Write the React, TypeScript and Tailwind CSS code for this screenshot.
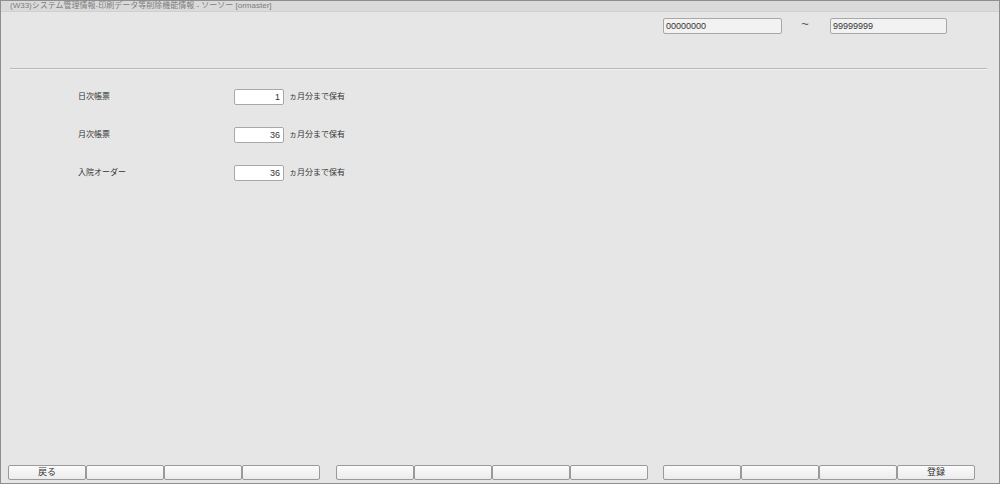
import React from "react";

const font = { fontFamily: '"Liberation Sans", "Noto Sans CJK JP", sans-serif' };

const rows = [
  { label: "日次帳票", value: "1" },
  { label: "月次帳票", value: "36" },
  { label: "入院オーダー", value: "36" },
];

const groups = [
  ["戻る", "", "", ""],
  ["", "", "", ""],
  ["", "", "", "登録"],
];

function FnButton({ text }: { text: string }) {
  return (
    <button className="h-[15px] w-[78px] rounded-[2px] border border-[#9a9a9a] bg-gradient-to-b from-[#fbfbfb] to-[#ececec] text-[9px] leading-none text-[#333]">
      {text}
    </button>
  );
}

export default function App() {
  return (
    <div
      className="flex h-[484px] w-[1000px] flex-col border border-[#8e8e8e] bg-[#e6e6e6] text-[#333]"
      style={font}
    >
      <div className="flex h-[11px] items-center border-b border-[#cfcfcf] bg-[#dadada] pl-[9px] text-[8px] leading-none text-[#7c7c7c]">
        (W33)システム管理情報-印刷データ等削除機能情報 - ソーソー [ormaster]
      </div>

      <div className="mt-[6px] flex h-[16px] items-start justify-end pr-[52px]">
        <div className="h-[16px] w-[119px] rounded-[2px] border border-[#a8a8a8] bg-[#f2f2f2] px-[2px] text-[9px] leading-[14px]">
          00000000
        </div>
        <div className="h-[16px] w-[48px] pr-[2px] text-center text-[13px] leading-[11px] text-[#555]">~</div>
        <div className="h-[16px] w-[117px] rounded-[2px] border border-[#a8a8a8] bg-[#f2f2f2] px-[2px] text-[9px] leading-[14px]">
          99999999
        </div>
      </div>

      <div className="mx-[9px] mr-[12px] mt-[34px] h-[2px] border-t border-[#b8b8b8] bg-[#f2f2f2]" />

      <div className="mt-[19px] flex flex-col gap-[22px]">
        {rows.map((r) => (
          <div key={r.label} className="flex items-center">
            <div className="w-[233px] pl-[77px] text-[8px] leading-none">{r.label}</div>
            <div className="h-[16px] w-[50px] rounded-[2px] border border-[#a8a8a8] bg-white px-[3px] text-right text-[9px] leading-[14px]">
              {r.value}
            </div>
            <div className="pl-[5px] text-[8px] leading-none">ヵ月分まで保有</div>
          </div>
        ))}
      </div>

      <div className="mb-[3px] mt-auto flex pl-[7px]">
        {groups.map((g, gi) => (
          <div key={gi} className={`flex ${gi === 0 ? "" : gi === 1 ? "ml-[16px]" : "ml-[15px]"}`}>
            {g.map((t, i) => (
              <FnButton key={i} text={t} />
            ))}
          </div>
        ))}
      </div>
    </div>
  );
}
